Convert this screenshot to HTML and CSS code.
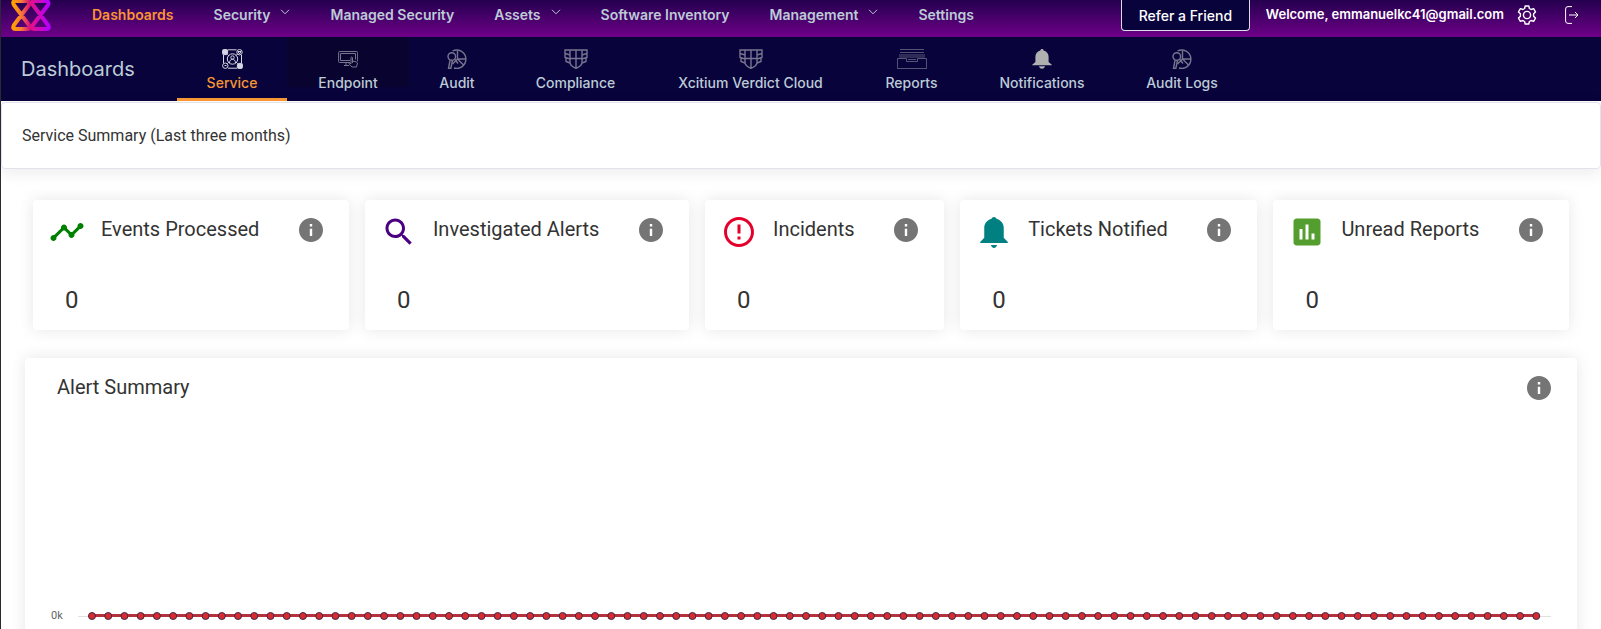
FILE: index.html
```html
<!DOCTYPE html>
<html lang="en">
<head>
<meta charset="utf-8">
<title>Dashboards - Service</title>
<link rel="stylesheet" href="styles.css">
</head>
<body>
<svg class="sprite" aria-hidden="true">
  <symbol id="chevron" viewBox="0 0 10 6"><path d="M1 .8l4 4 4-4" fill="none" stroke="currentColor"/></symbol>
  <symbol id="info" viewBox="2 2 20 20"><path fill="currentColor" d="M12 2C6.48 2 2 6.48 2 12s4.48 10 10 10 10-4.48 10-10S17.52 2 12 2zm1 15h-2v-6h2v6zm0-8h-2V7h2v2z"/></symbol>
  <symbol id="bell" viewBox="0 0 20 20"><path fill="currentColor" d="M10 0c-.9 0-1.500.6-1.600 1.400C5.500 2.100 3.400 4.500 3.400 7.600V13L.2 15.700v.5h19.600v-.5L16.600 13V7.600c0-3.100-2.100-5.500-5-6.200C11.500.6 10.900 0 10 0zM7 17.300c.4 1.700 1.500 2.500 3 2.500s2.600-.8 3-2.500z"/></symbol>
  <symbol id="audit" viewBox="0 0 20 20"><g fill="none" stroke="currentColor" stroke-width="1.400"><path d="M5.500 2A9.200 9.200 0 1 1 7 19M10.500.8V10l6.500 6.500M10.500 10h9M10.500 10l-5 5"/><circle cx="4.800" cy="7.500" r="3.800"/><path d="M3 11.500L1.500 19.500H3.800L5.500 11.500M8 10.500l3 4"/></g></symbol>
  <symbol id="shield" viewBox="0 0 24 20"><g fill="none" stroke="currentColor" stroke-width="1.400"><path d="M6 1h12v12.500c0 2.500-3 4.500-6 5.800-3-1.300-6-3.300-6-5.800zM12 1v18M6 9.500h12M6 1H1v3.500l5 1.500M1 4.500V8.500l5 1.500M2 9v3.500l4 1.500M18 1h5v3.500L18 6M23 4.500V8.500L18 10M22 9v3.500L18 14"/></g></symbol>
</svg>

<div class="page">
  <header class="topbar">
    <a class="logo" href="#" aria-label="Xcitium home">
      <svg viewBox="0 0 40 32" width="40" height="32">
        <defs>
          <linearGradient id="warm"><stop offset="0" stop-color="#ffa200"/><stop offset=".5" stop-color="#f8783a"/><stop offset="1" stop-color="#d8107c"/></linearGradient>
          <linearGradient id="cool"><stop offset="0" stop-color="#e0108c"/><stop offset="1" stop-color="#b400ff"/></linearGradient>
        </defs>
        <g fill="none" stroke-width="4" stroke-linejoin="round">
          <path stroke="url(#warm)" d="M4 1h12q3.500.5 2 4L3 25q-2 4 1.500 4h12q3.500 0 1.500-4L3 5Q1 1.500 4 1"/>
          <path stroke="url(#cool)" d="M23 1h12q3.500.5 2 4L22 25q-2 4 1.500 4h12q3.500 0 1.500-4L22 5q-2-3.500 1-4"/>
        </g>
      </svg>
    </a>
    <nav class="mainnav" aria-label="Main">
      <a class="active" href="#">Dashboards</a>
      <a href="#">Security <svg class="chev"><use href="#chevron"/></svg></a>
      <a href="#">Managed Security</a>
      <a href="#">Assets <svg class="chev"><use href="#chevron"/></svg></a>
      <a href="#">Software Inventory</a>
      <a href="#">Management <svg class="chev"><use href="#chevron"/></svg></a>
      <a href="#">Settings</a>
    </nav>
    <div class="account">
      <button class="refer" type="button">Refer a Friend</button>
      <span class="welcome">Welcome, emmanuelkc41@gmail.com</span>
      <button class="iconbtn" type="button" aria-label="Account settings">
        <svg viewBox="0 0 20 20" width="20" height="20" fill="none" stroke="currentColor" stroke-width="1.400" stroke-linejoin="round"><path d="M8.200 1h3.600l.6 2.500 1.700 1 2.500-.8 1.900 3.200-1.900 1.900v2.400l1.900 1.900-1.900 3.200-2.500-.8-1.700 1-.6 2.500H8.200l-.6-2.500-1.700-1-2.500.8-1.900-3.200 1.900-1.900V8.800L1.500 6.900l1.900-3.200 2.500.8 1.700-1z"/><circle cx="10" cy="10" r="3.600"/></svg>
      </button>
      <button class="iconbtn logout" type="button" aria-label="Log out">
        <svg viewBox="0 0 14 18" width="14" height="18" fill="none" stroke="currentColor"><path d="M7 .6H3Q.6.6.6 3v12q0 2.400 2.400 2.400h4M4 9h9M10 6l3 3-3 3"/></svg>
      </button>
    </div>
  </header>

  <div class="subbar">
    <h1>Dashboards</h1>
    <nav class="tabs" aria-label="Dashboards">
      <a class="tab selected" href="#">
        <svg width="21" height="20" viewBox="0 0 21 20" fill="none" stroke="currentColor"><rect x=".6" y=".6" width="5" height="5" rx="1" fill="currentColor"/><circle cx="17.500" cy="3.200" r="2.700"/><circle cx="3.300" cy="16.700" r="2.700"/><rect x="15.400" y="14.400" width="5" height="5" rx="1" fill="currentColor"/><circle cx="10.500" cy="10" r="5.200"/><circle cx="10.500" cy="8.500" r="1.700"/><path d="M7.500 14c0-5 6-5 6 0M6 .8h8.500M6 19.200h9M1.500 6v8M19.500 6v8M5.500 5.500L7 7M15.500 5L14 6.500M5.500 14.500L7 13M15.500 14.500L14 13M16 2.500h3L17.500 5zM2.500 16.500h2"/></svg>
        Service</a>
      <a class="tab hovered" href="#">
        <svg width="20" height="20" viewBox="0 0 20 20" fill="none" stroke="currentColor"><path d="M12 13.500H1.500Q.6 13.500.6 12.500v-9q0-1 1-1h17q1 0 1 1v9M2.500 4.500h15v6M2.500 4.500v7H12M6 16.500h5M8 13.500v3M14.500 14V8.500q-1-1-1.500 0v6.200l-1.500-.7q-1 .5 0 1.500l2.500 2.500h4.500l1-4q-.5-1.500-5-2"/></svg>
        Endpoint</a>
      <a class="tab" href="#"><svg width="20" height="20"><use href="#audit"/></svg>Audit</a>
      <a class="tab" href="#"><svg width="24" height="20"><use href="#shield"/></svg>Compliance</a>
      <a class="tab" href="#"><svg width="24" height="20"><use href="#shield"/></svg>Xcitium Verdict Cloud</a>
      <a class="tab" href="#">
        <svg width="30" height="20" viewBox="0 0 30 20" fill="none" stroke="currentColor" stroke-opacity=".7"><path d="M3 .5h24M3 3.500h24M2 6h26M2 8h26M.5 19.500h29v-10H20.500v3h-11v-3H.5zM11 10.500h8"/></svg>
        Reports</a>
      <a class="tab bright" href="#"><svg width="20" height="20"><use href="#bell"/></svg>Notifications</a>
      <a class="tab" href="#"><svg width="20" height="20"><use href="#audit"/></svg>Audit Logs</a>
    </nav>
  </div>

  <main>
    <h2 class="summary">Service Summary (Last three months)</h2>

    <section class="cards" aria-label="Service summary">
      <article class="card">
        <svg class="kind green" viewBox="0 0 24 24"><path d="M23 8c0 1.100-.9 2-2 2-.18 0-.35-.02-.51-.07l-3.560 3.550c.05.16.07.34.07.52 0 1.100-.9 2-2 2s-2-.9-2-2c0-.18.02-.36.07-.52l-2.550-2.550c-.16.05-.34.07-.52.07s-.36-.02-.52-.07l-4.550 4.560c.05.16.07.33.07.51 0 1.100-.9 2-2 2s-2-.9-2-2 .9-2 2-2c.18 0 .35.02.51.07l4.560-4.550C8.020 9.360 8 9.180 8 9c0-1.100.9-2 2-2s2 .9 2 2c0 .18-.02.36-.07.52l2.550 2.550c.16-.05.34-.07.52-.07s.36.02.52.07l3.550-3.560C19.020 8.350 19 8.180 19 8c0-1.100.9-2 2-2s2 .9 2 2z"/></svg>
        <h3>Events Processed</h3>
        <svg class="info" role="img" aria-label="Info"><use href="#info"/></svg>
        <p>0</p>
      </article>
      <article class="card">
        <svg class="kind indigo" viewBox="0 0 24 24"><path d="M15.500 14h-.79l-.28-.27C15.410 12.590 16 11.110 16 9.500 16 5.910 13.090 3 9.500 3S3 5.910 3 9.500 5.910 16 9.500 16c1.610 0 3.090-.59 4.230-1.570l.27.28v.79l5 4.990L20.490 19l-4.990-5zm-6 0C7.010 14 5 11.990 5 9.500S7.010 5 9.500 5 14 7.010 14 9.500 11.990 14 9.500 14z"/></svg>
        <h3>Investigated Alerts</h3>
        <svg class="info" role="img" aria-label="Info"><use href="#info"/></svg>
        <p>0</p>
      </article>
      <article class="card">
        <svg class="kind red" viewBox="0 0 24 24"><path d="M11 15h2v2h-2zm0-8h2v6h-2zm.99-5C6.470 2 2 6.480 2 12s4.470 10 9.990 10C17.520 22 22 17.520 22 12S17.520 2 11.990 2zM12 20c-4.420 0-8-3.580-8-8s3.580-8 8-8 8 3.580 8 8-3.580 8-8 8z"/></svg>
        <h3>Incidents</h3>
        <svg class="info" role="img" aria-label="Info"><use href="#info"/></svg>
        <p>0</p>
      </article>
      <article class="card">
        <svg class="kind teal" viewBox="0 0 24 24"><path d="M12 2c-.8 0-1.400.5-1.600 1.200C7.600 3.900 5.500 6.400 5.500 9.300v6.500L2.800 18.700v.6h18.400v-.6l-2.700-2.900V9.300c0-2.900-2.100-5.400-4.900-6.100C13.400 2.500 12.800 2 12 2zM10 20.700c.2 1.100 1 1.900 2 1.900s1.800-.8 2-1.900z"/></svg>
        <h3>Tickets Notified</h3>
        <svg class="info" role="img" aria-label="Info"><use href="#info"/></svg>
        <p>0</p>
      </article>
      <article class="card">
        <svg class="kind leaf" viewBox="0 0 24 24"><path d="M19 3H5c-1.100 0-2 .9-2 2v14c0 1.100.9 2 2 2h14c1.100 0 2-.9 2-2V5c0-1.100-.9-2-2-2zM9 17H7v-7h2v7zm4 0h-2V7h2v10zm4 0h-2v-4h2v4z"/></svg>
        <h3>Unread Reports</h3>
        <svg class="info" role="img" aria-label="Info"><use href="#info"/></svg>
        <p>0</p>
      </article>
    </section>

    <section class="panel">
      <div class="panelhead">
        <h3>Alert Summary</h3>
        <svg class="info" role="img" aria-label="Info"><use href="#info"/></svg>
      </div>
      <div class="chart">
        <span class="tick">0k</span>
        <svg class="plot" id="plot" role="img" aria-label="Alerts per day, all zero"></svg>
      </div>
    </section>
  </main>
</div>
<script src="script.js"></script>
</body>
</html>
```
FILE: styles.css
```css
* { box-sizing: border-box; }
body {
  margin: 0;
  background: #fff;
  color: #333;
  font-family: Roboto, "Liberation Sans", sans-serif;
}
h1, h2, h3, p { margin: 0; font-weight: 400; }
a { color: inherit; text-decoration: none; }
button { font: inherit; color: inherit; cursor: pointer; }
.sprite { position: absolute; width: 0; height: 0; }
.page {
  height: 100vh;
  overflow: hidden;
  border-left: 1px solid #2b2a33;
}

.topbar {
  display: flex;
  height: 37px;
  background: linear-gradient(#24004f, #6e0088);
  color: #bccbd6;
  font: 600 14px/29px Inter, sans-serif;
}
.logo { width: 40px; margin-left: 10px; }
.logo svg { display: block; }
.mainnav { display: flex; gap: 40px; margin-left: 41px; white-space: nowrap; }
.mainnav .active { color: #f79633; }
.mainnav a { display: flex; gap: 10px; }
.chev { width: 10px; height: 6px; margin-top: 9px; }
.account { display: flex; align-items: flex-start; margin-left: auto; color: #fff; white-space: nowrap; }
.refer {
  height: 31px;
  min-width: 129px;
  padding: 0 15px;
  border: 1px solid #dcdce6;
  border-top: 0;
  border-radius: 0 0 4px 4px;
  background: #08033b;
  font-weight: 500;
}
.welcome { margin-left: 16px; font-size: 13px; }
.iconbtn { display: flex; margin: 5px 0 0 13px; padding: 0; border: 0; background: none; }
.logout { margin: 6px 22px 0 28px; }

.subbar {
  display: flex;
  height: 64px;
  background: #08033b;
  color: #bccbd6;
  font: 500 14px/20px Inter, sans-serif;
}
.subbar h1 { width: 176px; padding-left: 20px; font-size: 20px; line-height: 64px; }
.tabs {
  display: grid;
  grid-template-columns: 110px 122px 96px 141px 209px 113px 148px 132px;
  white-space: nowrap;
}
.tab {
  display: flex;
  flex-direction: column;
  align-items: center;
  gap: 4px;
  padding-top: 12px;
}
.tab svg { flex: none; color: #77758e; }
.tab.selected { border-bottom: 3px solid #f79633; color: #f79633; }
.tab.selected svg { color: #d6d5e2; }
.tab.hovered { height: 50px; background: #090330; }
.tab.bright svg { color: #b0b0b0; }

.summary {
  margin-top: 1px;
  padding: 1px 20px 0;
  border: 1px solid #e2e3ea;
  border-radius: 4px;
  box-shadow: 0 4px 16px rgba(0, 0, 0, .08);
  font-size: 16px;
  line-height: 64px;
}
.cards { display: flex; gap: 16px; padding: 31px 32px 0; }
.card {
  display: grid;
  grid-template-columns: 36px 1fr 24px;
  grid-template-rows: 36px 1fr;
  flex: 1 1 auto;
  column-gap: 16px;
  height: 130px;
  padding: 14px 26px 0 16px;
  border-radius: 4px;
  background: #fff;
  box-shadow: 0 0 16px rgba(0, 0, 0, .1);
}
.card h3, .panelhead h3 { font-size: 20px; line-height: 30px; white-space: nowrap; }
.card p { grid-column: 1 / -1; padding: 36px 16px 0; font-size: 24px; line-height: 28px; }
.kind { width: 36px; height: 36px; fill: currentColor; }
.green { color: #008000; }
.indigo { color: #4b0082; }
.red { color: #e4002b; }
.teal { color: #008080; }
.leaf { color: #549e2f; }
.info { width: 24px; height: 24px; margin-top: 4px; color: #757575; }

.panel {
  margin: 28px 24px 0;
  padding: 14px 26px 0 32px;
  min-height: 400px;
  border-radius: 4px;
  box-shadow: 0 0 16px rgba(0, 0, 0, .1);
}
.panelhead { display: flex; justify-content: space-between; }
.chart { display: flex; align-items: flex-end; height: 220px; margin-left: -6px; }
.tick { width: 27px; color: #666; font-size: 11px; line-height: 12px; }
.plot { flex: 1; height: 12px; overflow: visible; }
.grid { stroke: #e0e0e0; }
.series { stroke: #b5323c; stroke-width: 3; }
.dot { fill: #d92b2f; stroke: #3b2a4a; }
```
FILE: script.js
```js
const NS = "http://www.w3.org/2000/svg";
const plot = document.getElementById("plot");
const days = 90;
const first = 0.95;
const last = 99;

function add(name, attrs) {
  const el = document.createElementNS(NS, name);
  for (const key in attrs) el.setAttribute(key, attrs[key]);
  plot.appendChild(el);
}

add("line", { class: "grid", x1: 0, x2: "100%", y1: 6.5, y2: 6.5 });
add("line", { class: "series", x1: first + "%", x2: last + "%", y1: 5.5, y2: 5.5 });
for (let i = 0; i < days; i++) {
  const x = first + (last - first) * i / (days - 1);
  add("circle", { class: "dot", cx: x + "%", cy: 6, r: 3.5 });
}
```
